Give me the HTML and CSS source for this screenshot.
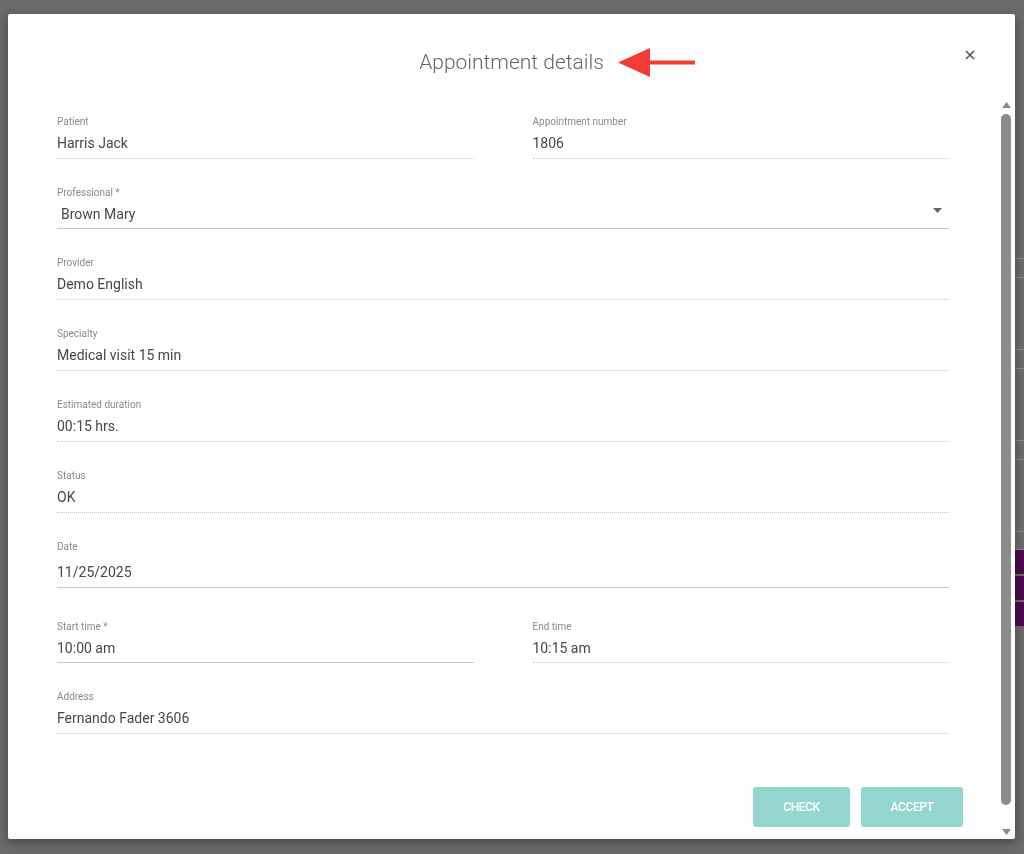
FILE: index.html
```html
<!doctype html>
<html lang="en">
  <head>
    <meta charset="UTF-8" />
    <meta name="viewport" content="width=device-width, initial-scale=1.0" />
    <title>Appointment details</title>
    <link rel="stylesheet" href="styles.css">
  </head>
  <body>
    <!-- page behind the overlay, only the right edge shows -->
    <div class="page">
      <div class="page-main"></div>
      <div class="page-side">
        <div class="slot"></div>
        <div class="slot"></div>
        <div class="slot"></div>
        <div class="slot slot-last"></div>
        <div class="event"></div>
        <div class="event"></div>
        <div class="event"></div>
      </div>
    </div>

    <div class="modal" role="dialog" aria-labelledby="modalTitle">
      <header class="modal-header">
        <div></div>
        <h1 class="modal-title" id="modalTitle">Appointment details</h1>
        <div class="header-right">
          <svg class="pointer" width="77" height="29" viewBox="0 0 77 29" aria-hidden="true">
            <polygon points="0,14.5 32,0 32,29" fill="#f23b35" />
            <rect x="30" y="12.5" width="47" height="4" fill="#f23b35" />
          </svg>
          <button class="close-button" aria-label="Close">
            <svg width="10" height="10" viewBox="0 0 10 10">
              <path d="M1 1 L9 9 M9 1 L1 9" stroke="#555" stroke-width="1.6" />
            </svg>
          </button>
        </div>
      </header>

      <div class="modal-body">
        <form class="modal-scroll" id="appointmentForm">
          <div class="fields">
            <div class="field">
              <span class="field-label">Patient</span>
              <div class="field-value">Harris Jack</div>
            </div>
            <div class="field">
              <span class="field-label">Appointment number</span>
              <div class="field-value">1806</div>
            </div>

            <div class="field field-wide field-select">
              <label class="field-label" for="professional">Professional *</label>
              <div class="select-box" id="professional">
                <span class="field-value">Brown Mary</span>
                <svg width="9" height="5" viewBox="0 0 9 5" aria-hidden="true">
                  <polygon points="0,0 9,0 4.5,5" fill="#666" />
                </svg>
              </div>
            </div>

            <div class="field field-wide">
              <span class="field-label">Provider</span>
              <div class="field-value">Demo English</div>
            </div>
            <div class="field field-wide">
              <span class="field-label">Specialty</span>
              <div class="field-value">Medical visit 15 min</div>
            </div>
            <div class="field field-wide">
              <span class="field-label">Estimated duration</span>
              <div class="field-value">00:15 hrs.</div>
            </div>
            <div class="field field-wide">
              <span class="field-label">Status</span>
              <div class="field-value">OK</div>
            </div>

            <div class="field field-wide field-input field-date">
              <label class="field-label" for="date">Date</label>
              <div class="field-value" id="date">11/25/2025</div>
            </div>

            <div class="field field-input field-time">
              <label class="field-label" for="startTime">Start time *</label>
              <div class="field-value" id="startTime">10:00 am</div>
            </div>
            <div class="field field-time">
              <span class="field-label">End time</span>
              <div class="field-value">10:15 am</div>
            </div>

            <div class="field field-wide">
              <span class="field-label">Address</span>
              <div class="field-value">Fernando Fader 3606</div>
            </div>
          </div>

          <div class="modal-actions">
            <button type="button" class="action-button check-button" disabled>Check</button>
            <button type="submit" class="action-button accept-button" disabled>Accept</button>
          </div>
        </form>

        <div class="scrollbar" aria-hidden="true">
          <div class="scroll-arrow">
            <svg width="9" height="6" viewBox="0 0 9 6"><polygon points="4.5,0 9,6 0,6" fill="#8a8a8a" /></svg>
          </div>
          <div class="scroll-thumb"></div>
          <div class="scroll-space"></div>
          <div class="scroll-arrow">
            <svg width="9" height="6" viewBox="0 0 9 6"><polygon points="0,0 9,0 4.5,6" fill="#8a8a8a" /></svg>
          </div>
        </div>
      </div>
    </div>
  </body>
</html>
```

FILE: styles.css
```css
:root {
  --backdrop: #6a6a6a;
  --label-color: #8a8a8a;
  --value-color: #474747;
  --line-color: #c9c9c9;
  --teal-disabled: #93d7ce;
}

* {
  margin: 0;
  padding: 0;
  box-sizing: border-box;
}

body {
  font-family: Roboto, 'Liberation Sans', sans-serif;
  background-color: var(--backdrop);
  width: 1024px;
  height: 854px;
  overflow: hidden;
}

/* background page */
.page {
  display: flex;
  height: 854px;
}

.page-main {
  flex: 1;
}

.page-side {
  width: 10px;
  padding-top: 258px;
  display: flex;
  flex-direction: column;
}

.slot {
  height: 20px;
  border: 1px solid #888;
  border-right: none;
  margin-bottom: 71px;
}

.slot-last {
  height: 19px;
  margin-bottom: 0;
}

.event {
  height: 24px;
  background: #4c0b4e;
  margin-bottom: 2px;
}

/* dialog */
.modal {
  position: fixed;
  left: 8px;
  top: 14px;
  width: 1007px;
  height: 825px;
  background: #fff;
  border-radius: 2px;
  box-shadow: 0 3px 10px rgba(0, 0, 0, 0.35);
  display: flex;
  flex-direction: column;
}

.modal-header {
  height: 84px;
  padding: 36px 40px 0 40px;
  display: grid;
  grid-template-columns: 1fr auto 1fr;
  align-items: start;
}

.modal-title {
  font-size: 21px;
  line-height: 24px;
  font-weight: 300;
  color: #666;
}

.header-right {
  display: flex;
  justify-content: space-between;
  align-items: flex-start;
}

.pointer {
  margin-left: 14px;
  margin-top: -2px;
}

.close-button {
  background: none;
  border: none;
  width: 10px;
  height: 10px;
  display: flex;
  cursor: pointer;
}

.modal-body {
  flex: 1;
  display: flex;
  padding-right: 3px;
  min-height: 0;
}

.modal-scroll {
  flex: 1;
  padding: 18px 37px 0 49px;
}

.fields {
  display: grid;
  grid-template-columns: 1fr 1fr;
  column-gap: 59px;
  margin-right: 14px;
}

.field {
  padding-bottom: 5px;
  border-bottom: 1px dotted var(--line-color);
  margin-bottom: 28px;
}

.field-wide {
  grid-column: 1 / -1;
}

.field-label {
  display: block;
  font-size: 10px;
  line-height: 12px;
  color: var(--label-color);
  margin-bottom: 5px;
}

.field-value {
  font-size: 14px;
  line-height: 20px;
  color: var(--value-color);
}

.field-input {
  border-bottom: 1px solid var(--line-color);
}

.field-select {
  border-bottom: 1px solid #c4c4c4;
  padding-bottom: 4px;
}

.select-box {
  display: flex;
  justify-content: space-between;
  align-items: center;
  padding: 0 7px 0 4px;
}

.select-box svg {
  margin-top: -8px;
}

.field-date .field-label {
  margin-bottom: 9px;
}

.field-date {
  margin-bottom: 33px;
}

.field-time {
  padding-bottom: 4px;
}

/* footer */
.modal-actions {
  display: flex;
  justify-content: flex-end;
  gap: 11px;
  margin-top: 25px;
}

.action-button {
  height: 40px;
  border: none;
  border-radius: 3px;
  background-color: var(--teal-disabled);
  color: #fff;
  font-family: Roboto, 'Liberation Sans', sans-serif;
  font-size: 12px;
  font-weight: 500;
  letter-spacing: -0.4px;
  text-transform: uppercase;
}

.check-button {
  width: 97px;
}

.accept-button {
  width: 102px;
}

/* fake scrollbar of the dialog body */
.scrollbar {
  width: 12px;
  display: flex;
  flex-direction: column;
  align-items: center;
}

.scroll-arrow {
  height: 14px;
  display: flex;
  align-items: center;
  justify-content: center;
}

.scroll-thumb {
  width: 10px;
  height: 691px;
  margin-top: 2px;
  background: #8c8c8c;
  border-radius: 5px;
}

.scroll-space {
  flex: 1;
}
```
